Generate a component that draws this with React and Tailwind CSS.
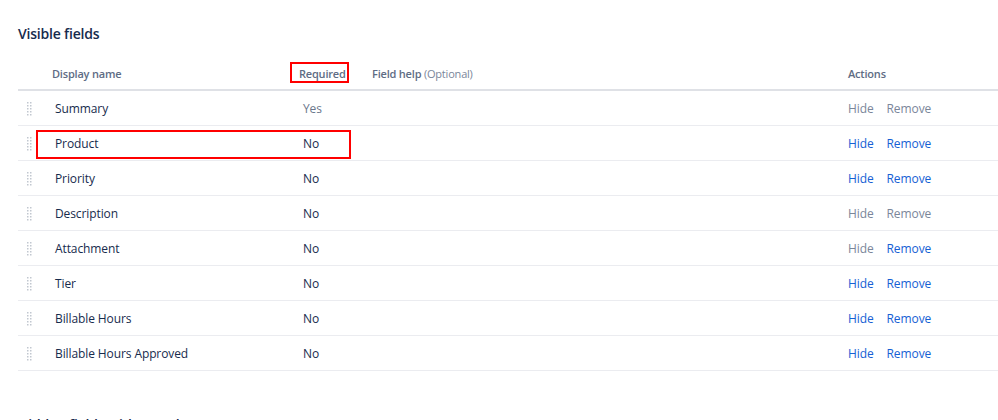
import React from "react";

const fields = [
  { name: "Summary", required: "Yes", hide: false, remove: false },
  { name: "Product", required: "No", hide: true, remove: true },
  { name: "Priority", required: "No", hide: true, remove: true },
  { name: "Description", required: "No", hide: false, remove: false },
  { name: "Attachment", required: "No", hide: false, remove: true },
  { name: "Tier", required: "No", hide: true, remove: true },
  { name: "Billable Hours", required: "No", hide: true, remove: true },
  { name: "Billable Hours Approved", required: "No", hide: true, remove: true },
];

function DragHandle() {
  const dots = [];
  for (let r = 0; r < 5; r++) {
    for (let c = 0; c < 2; c++) {
      dots.push(<rect key={`${r}-${c}`} x={c * 3} y={r * 3} width="1.5" height="1.5" fill="#c1c7d0" />);
    }
  }
  return (
    <svg width="5" height="14" viewBox="0 0 5 14" className="block">
      {dots}
    </svg>
  );
}

function ActionLink({ active, children }) {
  return (
    <span className={active ? "text-[#1560d4]" : "text-[#7a869a]"}>{children}</span>
  );
}

export default function App() {
  return (
    <div
      className="relative h-[420px] w-[998px] overflow-hidden bg-white pl-[18px] pt-[22px] text-[#172b4d]"
      style={{ fontFamily: '"Open Sans", "Noto Sans", sans-serif' }}
    >
      <h2 className="text-[14px] font-semibold leading-6 tracking-[-0.2px]">Visible fields</h2>

      <div className="mt-[11px] w-[980px]">
        <div className="flex h-[34px] items-center border-b-2 border-[#dfe1e6] pt-[2px] text-[11px] font-semibold tracking-[-0.2px] text-[#5e6c84]">
          <div className="w-[34px]" />
          <div className="w-[247px]">Display name</div>
          <div className="w-[73px]">Required</div>
          <div className="flex-1">
            Field help <span className="font-normal text-[#7a869a]">(Optional)</span>
          </div>
          <div className="w-[150px]">Actions</div>
        </div>

        {fields.map((f) => (
          <div
            key={f.name}
            className="flex h-[35px] items-center border-b border-[#ebecf0] pt-px text-[12px] tracking-[-0.1px]"
          >
            <div className="flex w-[37px] pl-[9px]">
              <DragHandle />
            </div>
            <div className="w-[248px]">{f.name}</div>
            <div className={`w-[69px] ${f.required === "Yes" ? "text-[#6b778c]" : ""}`}>
              {f.required}
            </div>
            <div className="flex-1" />
            <div className="flex w-[150px] gap-[13px]">
              <ActionLink active={f.hide}>Hide</ActionLink>
              <ActionLink active={f.remove}>Remove</ActionLink>
            </div>
          </div>
        ))}
      </div>

      <h2 className="mt-[42px] text-[14px] font-semibold leading-6 tracking-[-0.2px]">Hidden fields with no values</h2>

      <div className="pointer-events-none absolute left-[290px] top-[62px] h-[21px] w-[59px] border-2 border-[#ff0000]" />
      <div className="pointer-events-none absolute left-[36px] top-[130px] h-[29px] w-[315px] border-2 border-[#ff0000]" />
    </div>
  );
}
